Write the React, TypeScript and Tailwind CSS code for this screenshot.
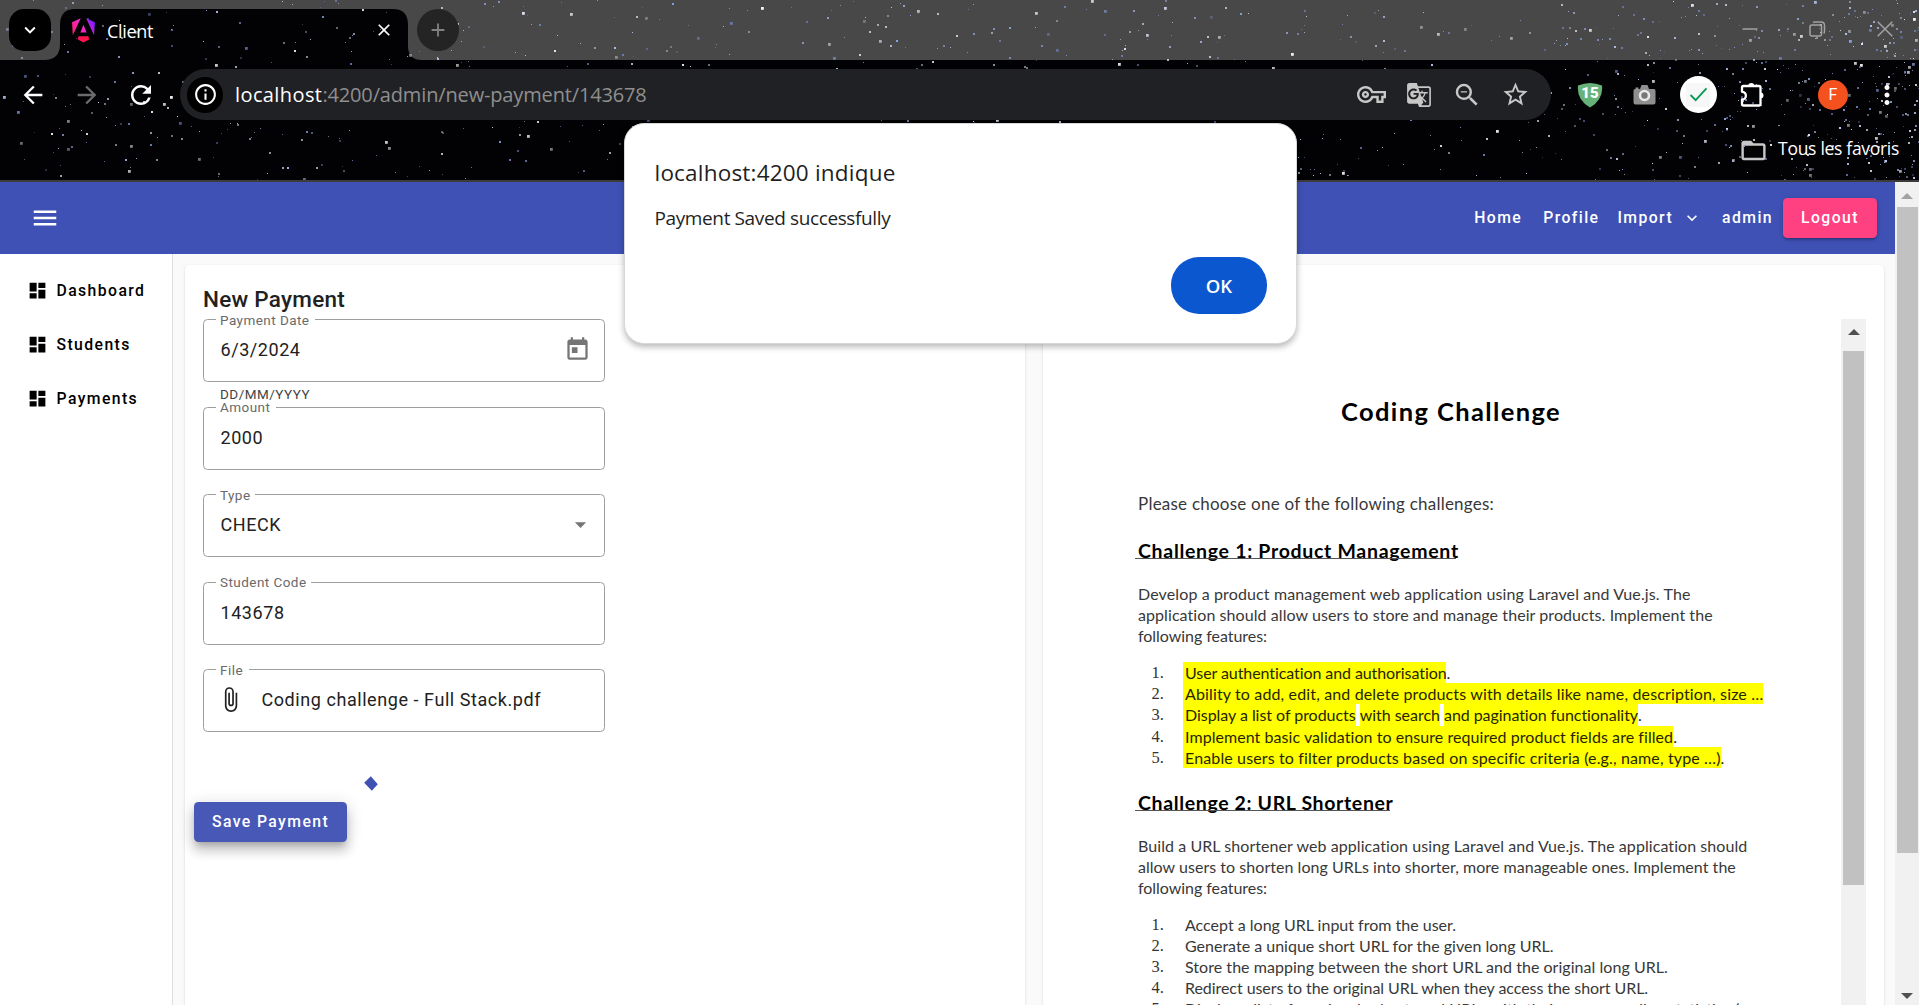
import type { ReactNode } from "react";
import {
  MdArrowBack, MdArrowDropDown, MdArrowForward, MdAttachFile, MdDashboard, MdExpandMore, MdFolderOpen,
  MdGTranslate, MdInfoOutline, MdMenu, MdOutlineExtension, MdOutlineVpnKey, MdRefresh,
  MdStarBorder, MdToday, MdZoomOut, MdAdd, MdClose, MdMoreVert,
} from "react-icons/md";

type Star = { x: number; y: number; s: number; c: string; o: number };

/** Repeatable star field for the browser theme, denser towards the right edge. */
function makeStars(count: number): Star[] {
  let seed = 20240603;
  const rnd = () => {
    seed = (seed * 1664525 + 1013904223) % 4294967296;
    return seed / 4294967296;
  };
  const tints = ["#8ea6e8", "#b8c8f8", "#e6eeff", "#6f7fb8", "#c9cde0"];
  return Array.from({ length: count }, () => {
    const dense = rnd() < 0.25;
    const x = dense ? 1919 - 400 * rnd() * rnd() : 1919 * rnd();
    const big = rnd();
    return {
      x: Math.round(x),
      y: Math.round(181 * rnd()),
      s: big > 0.88 ? 2.8 : big > 0.45 ? 2 : 1,
      c: big > 0.93 ? "#ffffff" : tints[Math.floor(rnd() * tints.length)],
      o: 0.35 + 0.6 * rnd(),
    };
  });
}

const stars = makeStars(1250);

function StarField() {
  return (
    <svg className="absolute inset-0" width="1919" height="180" viewBox="0 0 1919 180">
      <rect width="1919" height="180" fill="#020204" />
      <path
        fill="#484848"
        d="M0 0H1919V60H422Q408 60 408 46V25Q408 9 393 9H75Q60 9 60 25V44Q60 60 44 60H0Z"
      />
      {stars.map((s, i) => (
        <rect key={i} x={s.x} y={s.y} width={s.s} height={s.s} fill={s.c} opacity={s.o} />
      ))}
    </svg>
  );
}

function AngularLogo() {
  return (
    <svg width="23" height="25" viewBox="0 0 223 236">
      <defs>
        <linearGradient id="ng" x1="0" y1="0.7" x2="1" y2="0.3">
          <stop offset="0" stopColor="#ff1e7a" />
          <stop offset="0.5" stopColor="#f02ad0" />
          <stop offset="1" stopColor="#7a1bff" />
        </linearGradient>
      </defs>
      <path
        fill="url(#ng)"
        d="m222.077 39.192-8.019 125.923L137.387 0l84.69 39.192ZM111.039 62.675l30.357 73.803H80.681l30.358-73.803ZM7.937 165.115 0 39.192 84.69 0 7.937 165.115Z"
      />
      <path fill="#fb1450" d="m168.972 202.017-57.933 33.056-57.934-33.056 11.783-28.556h92.301l11.783 28.556Z" />
    </svg>
  );
}

function TabStrip() {
  return (
    <div className="relative flex h-[60px] items-start pt-[9px] pl-[9px]">
      <div className="flex size-[42px] items-center justify-center rounded-[15px] bg-black">
        <MdExpandMore className="size-[22px] text-white" />
      </div>
      <div className="ml-[9px] flex h-[46px] w-[348px] items-center pl-[12px]">
        <div className="pb-[3px]"><AngularLogo /></div>
        <span className="ml-[12px] pb-[2px] font-['Open_Sans','Noto_Sans',sans-serif] text-[18px] leading-none tracking-[-0.33px] text-white">Client</span>
        <MdClose className="mr-[14px] mb-[4px] ml-auto size-[20px] text-white" />
      </div>
      <div className="ml-[9px] flex size-[42px] items-center justify-center rounded-full bg-[#242424]">
        <MdAdd className="size-[22px] text-[#808080]" />
      </div>
      <div className="mt-[12px] mr-[26px] ml-auto flex items-center gap-[51px] text-[#a2a2a2]">
        <svg width="16" height="16" viewBox="0 0 16 16" stroke="currentColor" strokeWidth="1.5"><path d="M0.5 8H15.5" /></svg>
        <svg width="17" height="16" viewBox="0 0 17 16" fill="none" stroke="currentColor" strokeWidth="1.5">
          <rect x="1" y="4" width="11.5" height="11" rx="2" />
          <path d="M4 1.5Q5 1 6 1H12Q15.500 1 15.500 4.500V10Q15.500 11.500 14.800 12.500" />
        </svg>
        <svg width="16" height="16" viewBox="0 0 16 16" stroke="currentColor" strokeWidth="1.5"><path d="M0.700 0.700L15.300 15.300M15.300 0.700L0.700 15.300" /></svg>
      </div>
    </div>
  );
}

function Slot({ children, className = "w-[54px]" }: { children: ReactNode; className?: string }) {
  return <div className={"flex shrink-0 items-center justify-center " + className}>{children}</div>;
}

function Toolbar() {
  return (
    <div className="relative flex h-[69px] items-center pl-[19px] text-white">
      <MdArrowBack className="size-[28px]" />
      <MdArrowForward className="ml-[26px] size-[28px] text-[#6c6c6c]" />
      <MdRefresh className="ml-[25px] size-[30px]" />
      <div className="ml-[24px] flex h-[51px] w-[1371px] items-center rounded-full bg-[#202124] pr-[12px] pl-[7px]">
        <div className="flex size-[36px] items-center justify-center rounded-full bg-black">
          <MdInfoOutline className="size-[25px]" />
        </div>
        <div className="ml-[12px] font-['Open_Sans','Noto_Sans',sans-serif] text-[20px] leading-none whitespace-nowrap">
          <span className="tracking-[0.4px]">localhost</span>
          <span className="tracking-[-0.15px] text-[#8f8f8f]">:4200/admin/new-payment/143678</span>
        </div>
        <div className="ml-auto flex text-[#c7c7c7]">
          <Slot className="w-[48px]"><MdOutlineVpnKey className="size-[29px]" /></Slot>
          <Slot className="w-[48px]"><MdGTranslate className="size-[26px]" /></Slot>
          <Slot className="w-[48px]"><MdZoomOut className="size-[30px]" /></Slot>
          <Slot className="w-[48px]"><MdStarBorder className="size-[29px]" /></Slot>
        </div>
      </div>
      <div className="ml-[12px] flex items-center">
        <Slot>
          <div className="relative flex h-[26px] w-[26px] justify-center">
            <svg className="absolute inset-0" width="26" height="26" viewBox="0 0 26 26">
              <path d="M1 3.500Q13 -1.500 25 3.500Q26.500 18 13 25.500Q-0.500 18 1 3.500Z" fill="#67b279" />
            </svg>
            <span className="relative pt-[4px] font-['Roboto',sans-serif] text-[15px] leading-none font-black text-white">15</span>
          </div>
        </Slot>
        <Slot>
          <svg width="23" height="21" viewBox="0 0 23 21">
            <path d="M2 5H2.500V3.500H5.500V5H7L8.500 1H14.500L16 5H21Q22.500 5 22.500 7V18.500Q22.500 20.500 20.500 20.500H2.500Q0.500 20.500 0.500 18.500V7Q0.500 5 2 5Z" fill="#8f8f8f" />
            <circle cx="11.500" cy="11.500" r="4.500" fill="#777" stroke="#e8e8e8" strokeWidth="2.600" />
          </svg>
        </Slot>
        <Slot>
          <div className="flex size-[37px] items-center justify-center rounded-full bg-white">
            <div className="flex size-[24px] items-center justify-center bg-[#f7f7f7]">
              <svg width="19" height="15" viewBox="0 0 20 16" fill="none" stroke="#0a9b57" strokeWidth="2"><path d="M1.500 8.500L7 14L18.500 1.500" /></svg>
            </div>
          </div>
        </Slot>
        <Slot>
          <svg width="28" height="28" viewBox="0 0 28 28">
            <path d="M4 6.500Q4 5 5.500 5H21Q22.500 5 22.500 6.500V23Q22.500 24.500 21 24.500H5.500Q4 24.500 4 23V18.500A3.800 3.800 0 0 0 4 10.800Z" fill="none" stroke="#fff" strokeWidth="2.300" strokeLinejoin="round" />
            <path d="M10.300 5A3 3 0 0 1 16.300 5ZM22.500 11.500A3 3 0 0 1 22.500 17.500Z" fill="#fff" />
          </svg>
        </Slot>
        <Slot className="ml-[27px] w-[54px]">
          <div className="flex size-[30px] items-center justify-center rounded-full bg-[#f4511e] font-['Roboto',sans-serif] text-[16px] leading-none">F</div>
        </Slot>
        <Slot><MdMoreVert className="size-[30px]" /></Slot>
      </div>
    </div>
  );
}

function Browser() {
  return (
    <div className="relative h-[182px] border-b-2 border-[#3c3c3c]">
      <StarField />
      <TabStrip />
      <Toolbar />
      <div className="relative flex h-[42px] items-center justify-end pr-[20px] text-white">
        <MdFolderOpen className="size-[29px] text-[#c7c7c7]" />
        <span className="ml-[10px] pb-[3px] font-['Open_Sans','Noto_Sans',sans-serif] text-[17.5px] leading-none tracking-[-0.3px]">Tous les favoris</span>
      </div>
    </div>
  );
}

function TopNav() {
  return (
    <header className="flex h-[72px] items-center bg-[#3f51b5] pr-[18px] pl-[30px] font-['Roboto',sans-serif] text-[15.75px] font-medium tracking-[1.41px] text-white">
      <MdMenu className="size-[30px]" />
      <span className="ml-auto">Home</span>
      <span className="ml-[21px]">Profile</span>
      <span className="ml-[18px]">Import</span>
      <MdExpandMore className="ml-[9px] size-[20px]" />
      <span className="ml-[20px]">admin</span>
      <div className="ml-[10px] flex h-[40px] w-[94px] items-center justify-center rounded-[4.5px] bg-[#ff4081] shadow-[0_3px_2px_-2px_rgba(0,0,0,.2),0_2px_3px_rgba(0,0,0,.14),0_1px_6px_rgba(0,0,0,.12)]">Logout</div>
    </header>
  );
}

function Sidebar() {
  return (
    <nav className="w-[173px] shrink-0 border-r border-[#dedede] bg-white pt-[9.5px] font-['Roboto',sans-serif] text-[15.75px] font-medium tracking-[1.41px] text-black">
      {["Dashboard", "Students", "Payments"].map((item) => (
        <div key={item} className="flex h-[54px] items-center pl-[26.5px]">
          <MdDashboard className="size-[21px]" />
          <span className="ml-[9px]">{item}</span>
        </div>
      ))}
    </nav>
  );
}

function Field({ label, gap, children }: { label: string; gap: string; children: ReactNode }) {
  return (
    <div className="relative flex h-[63px] w-[402px] items-center rounded-[4.5px] border border-[#9e9e9e] pr-[16px] pb-[2px] pl-[16.5px] text-[18px] tracking-[0.56px] text-[#212121]">
      <span className={"absolute -top-[1.5px] left-[12px] h-[2px] bg-white pl-[4px] text-[13.5px] leading-[2px] tracking-[0.45px] whitespace-nowrap text-[#6a6a6a] " + gap}>
        {label}
      </span>
      {children}
    </div>
  );
}

const card = "rounded-[4.5px] bg-white shadow-[0_2px_1px_-1px_rgba(0,0,0,.12),0_1px_1px_rgba(0,0,0,.08),0_1px_3px_rgba(0,0,0,.12)]";

function PaymentForm() {
  return (
    <section className={"h-[760px] w-[840px] shrink-0 pl-[18px] font-['Roboto',sans-serif] " + card}>
      <h1 className="flex h-[54.5px] items-center pt-[15px] text-[22.5px] leading-none font-medium tracking-[0.25px] text-[#212121]">New Payment</h1>
      <Field label="Payment Date" gap="w-[99px]">
        6/3/2024
        <MdToday className="-mr-[3px] ml-auto size-[27px] text-[#757575]" />
      </Field>
      <div className="flex h-[24.5px] items-center pt-[1px] pl-[17px] text-[13.5px] leading-none tracking-[0.48px] text-[#444]">DD/MM/YYYY</div>
      <div className="flex flex-col gap-[24.5px]">
        <Field label="Amount" gap="w-[60px]">2000</Field>
        <Field label="Type" gap="w-[39px]">
          CHECK
          <MdArrowDropDown className="-mr-[6px] ml-auto size-[27px] text-[#757575]" />
        </Field>
        <Field label="Student Code" gap="w-[95px]">143678</Field>
        <Field label="File" gap="w-[33px]">
          <MdAttachFile className="-ml-[4px] size-[27px]" />
          <span className="ml-[18px]">Coding challenge - Full Stack.pdf</span>
        </Field>
      </div>
      <div className="flex h-[70px] pt-[44px] pl-[161px]">
        <svg width="14" height="15" viewBox="0 0 14 15"><path d="M6.800 0.300L13.800 8.200L7.800 14.700L0.200 6.800Z" fill="#3f51b5" /></svg>
      </div>
      <div className="-ml-[9px] flex h-[40px] w-[153px] items-center justify-center rounded-[4.5px] bg-[#4858b7] text-[15.75px] font-medium tracking-[1.41px] text-white shadow-[0_5px_6px_-3px_rgba(0,0,0,.2),0_9px_11px_1px_rgba(0,0,0,.14),0_3px_16px_2px_rgba(0,0,0,.12)]">
        Save Payment
      </div>
    </section>
  );
}

const mark = "-ml-[2.5px] inline-block h-[21.1px] bg-[#ffff00] pl-[2.5px] align-top leading-[21px]";
const markMid = "inline-block h-[21.1px] bg-[#ffff00] align-top leading-[21px]";

function Item({ n, children }: { n: number; children: ReactNode }) {
  return (
    <li className="flex h-[21.1px]">
      <span className="w-[47px] pl-[13.5px] font-['Liberation_Serif',serif] text-[16.5px] tracking-normal text-[#333]">{n}.</span>
      <span>{children}</span>
    </li>
  );
}

function DocHeading({ children, line, className }: { children: string; line: string; className: string }) {
  return (
    <h3 className={"relative h-[24px] text-[19.5px] leading-[25.5px] font-bold text-black " + className}>
      <span className="relative">{children}</span>
      <span className={"absolute top-[20px] -left-[3px] h-[1.5px] bg-[#555] " + line} />
    </h3>
  );
}

function Document() {
  return (
    <article className="mt-[54.5px] w-[798px] overflow-hidden pl-[95px] font-['Lato',sans-serif] text-[16px] leading-[21.1px] whitespace-nowrap text-[#383838]">
      <h2 className="mt-[76.5px] pl-[203px] text-[25.5px] leading-[30px] font-bold tracking-[1.38px] text-black">Coding Challenge</h2>
      <p className="mt-[67px] text-[17px] leading-[21px] tracking-[0.23px]">Please choose one of the following challenges:</p>
      <DocHeading className="mt-[24px] tracking-[0.7px]" line="w-[321px]">Challenge 1: Product Management</DocHeading>
      <p className="mt-[21.8px]">
        <span className="block tracking-[0.126px]">Develop a product management web application using Laravel and Vue.js. The</span>
        <span className="block tracking-[0.075px]">application should allow users to store and manage their products. Implement the</span>
        <span className="block tracking-[-0.04px]">following features:</span>
      </p>
      <ol className="mt-[15.7px] text-[#262600]">
        <Item n={1}><span className={mark + " tracking-[-0.08px]"}>User authentication and authorisation</span>.</Item>
        <Item n={2}><span className={mark + " tracking-[0.14px]"}>Ability to add, edit, and delete products with details like name, description, size …</span></Item>
        <Item n={3}>
          <span className={mark + " tracking-[-0.04px]"}>Display a list of products</span> <span className={markMid + " tracking-[-0.04px]"}>with search</span>{" "}
          <span className={markMid + " tracking-[-0.06px]"}>and pagination functionality</span>.
        </Item>
        <Item n={4}><span className={mark + " tracking-[0.06px]"}>Implement basic validation to ensure required product fields are filled</span>.</Item>
        <Item n={5}><span className={mark + " tracking-[0.13px]"}>Enable users to filter products based on specific criteria (e.g., name, type …)</span>.</Item>
      </ol>
      <DocHeading className="mt-[22.2px] tracking-[0.64px]" line="w-[255px]">Challenge 2: URL Shortener</DocHeading>
      <p className="mt-[21.3px]">
        <span className="block tracking-[0.07px]">Build a URL shortener web application using Laravel and Vue.js. The application should</span>
        <span className="block tracking-[0.04px]">allow users to shorten long URLs into shorter, more manageable ones. Implement the</span>
        <span className="block tracking-[-0.04px]">following features:</span>
      </p>
      <ol className="mt-[15.2px]">
        <Item n={1}>Accept a long URL input from the user.</Item>
        <Item n={2}>Generate a unique short URL for the given long URL.</Item>
        <Item n={3}><span className="tracking-[0.04px]">Store the mapping between the short URL and the original long URL.</span></Item>
        <Item n={4}><span className="tracking-[-0.06px]">Redirect users to the original URL when they access the short URL.</span></Item>
        <Item n={5}><span className="tracking-[0.09px]">Display a list of previously shortened URLs with their corresponding statistics (</span></Item>
      </ol>
    </article>
  );
}

function Arrow({ down = false, color }: { down?: boolean; color: string }) {
  return (
    <svg width="12" height="6" viewBox="0 0 12 6"><path d={down ? "M0 0H12L6 6Z" : "M0 6H12L6 0Z"} fill={color} /></svg>
  );
}

function DocumentCard() {
  return (
    <section className={"flex h-[760px] w-[841px] shrink-0 " + card}>
      <Document />
      <div className="mt-[54.500px] flex w-[25px] flex-col items-center bg-[#f1f1f1]">
        <div className="flex h-[32px] items-center pb-[6px]"><Arrow color="#505050" /></div>
        <div className="h-[534px] w-[21px] bg-[#c1c1c1]" />
      </div>
    </section>
  );
}

function AlertDialog() {
  return (
    <div className="absolute top-[123px] left-[624px] flex h-[221px] w-[673px] flex-col rounded-[20px] border border-[#d5d9d8] bg-white pt-[35px] pr-[29px] pl-[29.5px] font-['Open_Sans','Noto_Sans',sans-serif] text-[#1f1f1f] shadow-[0_3px_6px_rgba(0,0,0,.28)]">
      <div className="text-[22.5px] leading-[28px] font-medium tracking-[0.2px] whitespace-nowrap">localhost:4200 indique</div>
      <div className="mt-[18px] text-[19px] leading-[26px] tracking-[-0.38px]">Payment Saved successfully</div>
      <div className="mt-[26px] flex h-[57px] w-[96px] items-center justify-center self-end rounded-[28px] bg-[#0b57d0] text-[18.5px] font-semibold text-white">OK</div>
    </div>
  );
}

function PageScrollbar() {
  return (
    <div className="flex w-[24px] shrink-0 flex-col items-center bg-[#f1f1f1]">
      <div className="flex h-[25px] items-center pt-[2px]"><Arrow color="#a3a3a3" /></div>
      <div className="h-[646px] w-[21px] bg-[#c1c1c1]" />
      <div className="mt-auto flex h-[18px] items-center"><Arrow down color="#505050" /></div>
    </div>
  );
}

export default function App() {
  return (
    <div className="relative flex h-[1005px] w-[1919px] flex-col overflow-hidden bg-white">
      <Browser />
      <div className="flex h-[823px]">
        <div className="flex w-[1895px] flex-col">
          <TopNav />
          <div className="flex h-[751px] overflow-hidden bg-[#fafafa]">
            <Sidebar />
            <main className="flex gap-[18px] pt-[10.5px] pl-[12px]">
              <PaymentForm />
              <DocumentCard />
            </main>
          </div>
        </div>
        <PageScrollbar />
      </div>
      <AlertDialog />
    </div>
  );
}
